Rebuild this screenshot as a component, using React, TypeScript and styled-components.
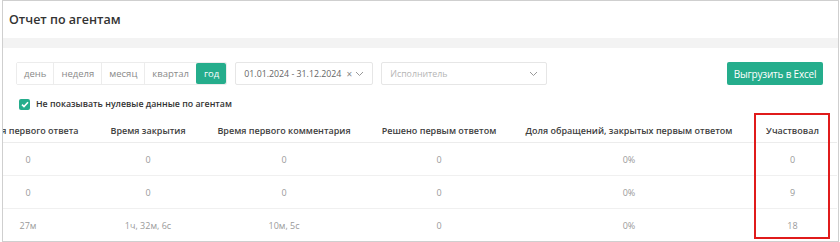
import React from 'react';
import styled, { createGlobalStyle } from 'styled-components';

const GlobalStyle = createGlobalStyle`
    html, body {
        margin: 0;
        padding: 0;
        background: #ffffff;
        font-family: "Open Sans", "Noto Sans", sans-serif;
    }
`

const TEAL = '#25ad8c';

const Panel = styled.div`
    position: relative;
    box-sizing: border-box;
    margin-left: 2px;
    width: 837px;
    height: 242px;
    border: 1px solid #cfcfcf;
    overflow: hidden;
`

const Title = styled.div`
    height: 37px;
    padding-left: 6px;
    display: flex;
    align-items: center;
    font-size: 12.5px;
    font-weight: 600;
    color: #333333;
`

const Band = styled.div`
    height: 10px;
    background: #f3f3f3;
`

const Content = styled.div`
    padding: 14px 15px 0 13px;
`

const Toolbar = styled.div`
    display: flex;
    align-items: center;
    height: 23px;
`

const Segments = styled.div`
    display: flex;
    height: 23px;
    border: 1px solid #ececec;
    box-sizing: border-box;
    border-radius: 2px;
`

const Segment = styled.div<{ $active?: boolean }>`
    display: flex;
    align-items: center;
    padding: 0 7px;
    font-size: 9.5px;
    color: ${p => p.$active ? '#ffffff' : '#8a8a8a'};
    background: ${p => p.$active ? TEAL : '#ffffff'};
    border-left: 1px solid ${p => p.$active ? TEAL : '#ececec'};
    border-radius: ${p => p.$active ? '2px' : '0'};
    &:first-child {
        border-left: none;
    }
`

const Field = styled.div<{ $width: number; $gap: number }>`
    display: flex;
    align-items: center;
    box-sizing: border-box;
    width: ${p => p.$width}px;
    height: 23px;
    margin-left: ${p => p.$gap}px;
    padding: 0 8px;
    border: 1px solid #e6e6e6;
    border-radius: 2px;
    font-size: 8.8px;
    white-space: nowrap;
    color: #666666;
`

const FieldText = styled.span<{ $muted?: boolean }>`
    flex: 1;
    color: ${p => p.$muted ? '#b5b5b5' : '#666666'};
`

const ClearMark = styled.span`
    font-size: 10px;
    color: #888888;
    margin-right: 3px;
`

const Spacer = styled.div`
    flex: 1;
`

const ExportButton = styled.div`
    display: flex;
    align-items: center;
    justify-content: center;
    width: 96px;
    height: 23px;
    background: ${TEAL};
    border-radius: 2px;
    color: #ffffff;
    font-size: 10px;
    letter-spacing: -0.2px;
`

const CheckRow = styled.div`
    display: flex;
    align-items: center;
    gap: 6px;
    margin-top: 13px;
    margin-left: 3px;
    font-size: 8.8px;
    font-weight: 600;
    color: #333333;
`

const CheckBox = styled.div`
    width: 11px;
    height: 11px;
    border-radius: 2px;
    background: ${TEAL};
    display: flex;
    align-items: center;
    justify-content: center;
`

const TableClip = styled.div`
    margin-top: 8px;
    overflow: hidden;
`

const Table = styled.div`
    margin-left: -43px;
    display: grid;
    grid-template-columns: 136px 104px 168px 142px 238px 89px;
`

const HeadCell = styled.div`
    box-sizing: border-box;
    height: 25px;
    display: flex;
    align-items: center;
    justify-content: center;
    white-space: nowrap;
    font-size: 9px;
    font-weight: 600;
    color: #404040;
    border-bottom: 1px solid #ececec;
`

const Cell = styled.div<{ $last?: boolean }>`
    box-sizing: border-box;
    height: 33px;
    display: flex;
    align-items: center;
    justify-content: center;
    white-space: nowrap;
    font-size: 9px;
    color: #9a9a9a;
    border-bottom: 1px solid ${p => p.$last ? 'transparent' : '#f0f0f0'};
`

const Highlight = styled.div`
    position: absolute;
    left: 751px;
    top: 112px;
    width: 76px;
    height: 126px;
    box-sizing: border-box;
    border: 2px solid #e01b1b;
    pointer-events: none;
`

const Chevron = () => (
    <svg width="9" height="6" viewBox="0 0 9 6">
        <path d="M1 1l3.5 3.5L8 1" fill="none" stroke="#999" strokeWidth="1" />
    </svg>
)

const columns = [
    'Время первого ответа',
    'Время закрытия',
    'Время первого комментария',
    'Решено первым ответом',
    'Доля обращений, закрытых первым ответом',
    'Участвовал',
]

const rows = [
    ['0', '0', '0', '0', '0%', '0'],
    ['0', '0', '0', '0', '0%', '9'],
    ['27м', '1ч, 32м, 6с', '10м, 5с', '0', '0%', '18'],
]

const periods = ['день', 'неделя', 'месяц', 'квартал', 'год']

export default function App() {
    return (
        <>
            <GlobalStyle />
            <Panel>
                <Title>Отчет по агентам</Title>
                <Band />
                <Content>
                    <Toolbar>
                        <Segments>
                            {periods.map(p => (
                                <Segment key={p} $active={p === 'год'}>{p}</Segment>
                            ))}
                        </Segments>
                        <Field $width={138} $gap={8}>
                            <FieldText>01.01.2024 - 31.12.2024</FieldText>
                            <ClearMark>×</ClearMark>
                            <Chevron />
                        </Field>
                        <Field $width={166} $gap={8}>
                            <FieldText $muted>Исполнитель</FieldText>
                            <Chevron />
                        </Field>
                        <Spacer />
                        <ExportButton>Выгрузить в Excel</ExportButton>
                    </Toolbar>
                    <CheckRow>
                        <CheckBox>
                            <svg width="8" height="7" viewBox="0 0 8 7">
                                <path d="M1 3.6l2 2L7 1.3" fill="none" stroke="#fff" strokeWidth="1.6" />
                            </svg>
                        </CheckBox>
                        Не показывать нулевые данные по агентам
                    </CheckRow>
                </Content>
                <TableClip>
                    <Table>
                        {columns.map(c => <HeadCell key={c}>{c}</HeadCell>)}
                        {rows.map((r, i) => r.map((v, j) => (
                            <Cell key={`${i}-${j}`} $last={i === rows.length - 1}>{v}</Cell>
                        )))}
                    </Table>
                </TableClip>
                <Highlight />
            </Panel>
        </>
    )
}
